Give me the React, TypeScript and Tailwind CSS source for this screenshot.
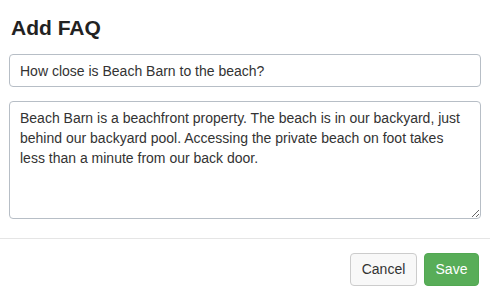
import React, { useState } from 'react';

const App: React.FC = () => {
  const [question, setQuestion] = useState('How close is Beach Barn to the beach?');
  const [answer, setAnswer] = useState(
    'Beach Barn is a beachfront property. The beach is in our backyard, just behind our backyard pool. Accessing the private beach on foot takes less than a minute from our back door.'
  );

  return (
    <div
      className="w-[490px] h-[296px] bg-white flex flex-col text-[#333]"
      style={{ fontFamily: '"Liberation Sans", Arial, sans-serif' }}
    >
      {/* Body */}
      <div className="px-[9px] pt-[16px] pb-[19px] flex flex-col">
        <h2 className="text-[21px] leading-[23px] font-bold text-[#222] pl-[2px]">Add FAQ</h2>
        <input
          value={question}
          onChange={(e) => setQuestion(e.target.value)}
          className="mt-[15px] h-[33px] w-full rounded-[4px] border border-[#b7bec6] px-[10px] text-[14px] text-[#333] outline-none"
        />
        <textarea
          value={answer}
          onChange={(e) => setAnswer(e.target.value)}
          className="mt-[14px] h-[118px] w-full rounded-[4px] border border-[#b7bec6] px-[10px] py-[6px] text-[14px] leading-[20px] text-[#333] outline-none resize-y"
        />
      </div>

      {/* Footer */}
      <div className="border-t border-[#e5e5e5] pt-[14px] pr-[11px] flex justify-end gap-[7px]">
        <button className="h-[33px] w-[67px] rounded-[4px] border border-[#ccc] bg-[#f8f8f8] text-[14px] text-[#333]">
          Cancel
        </button>
        <button className="h-[33px] w-[55px] rounded-[4px] border border-[#52a852] bg-[#58ad58] text-[14px] text-white">
          Save
        </button>
      </div>
    </div>
  );
};

export default App;
